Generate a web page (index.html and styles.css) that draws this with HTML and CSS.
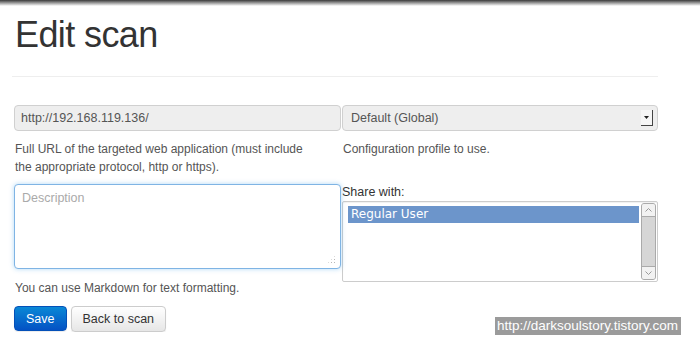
FILE: index.html
```html
<!DOCTYPE html>
<html lang="en">
<head>
    <meta charset="UTF-8">
    <meta name="viewport" content="width=device-width, initial-scale=1.0">
    <title>Edit scan</title>
    <link rel="stylesheet" href="styles.css">
</head>
<body>
    <div class="topbar"></div>
    <div class="page">
        <h1>Edit scan</h1>
        <hr class="divider">

        <div class="row first">
            <div class="col">
                <input class="field" type="text" value="http://192.168.119.136/" readonly>
                <p class="help">Full URL of the targeted web application (must include the appropriate protocol, http or https).</p>
            </div>
            <div class="col">
                <div class="select">
                    <span>Default (Global)</span>
                    <span class="select-arrow"><svg width="5" height="3" viewBox="0 0 5 3"><path d="M0 0h5L2.5 3z" fill="#222"/></svg></span>
                </div>
                <p class="help">Configuration profile to use.</p>
            </div>
        </div>

        <div class="row">
            <div class="col">
                <div class="area-wrap">
                    <textarea class="area" placeholder="Description"></textarea>
                </div>
                <p class="help note">You can use Markdown for text formatting.</p>
                <div class="actions">
                    <button class="btn btn-primary">Save</button>
                    <button class="btn">Back to scan</button>
                </div>
            </div>
            <div class="col">
                <label class="label">Share with:</label>
                <div class="listbox">
                    <div class="options">
                        <div class="option selected">Regular User</div>
                    </div>
                    <div class="scrollbar">
                        <span class="scroll-btn"><svg width="7" height="4" viewBox="0 0 7 4"><path d="M0.5 3.5L3.5 0.5L6.5 3.5" fill="none" stroke="#999"/></svg></span>
                        <span class="scroll-track"></span>
                        <span class="scroll-btn"><svg width="7" height="4" viewBox="0 0 7 4"><path d="M0.5 0.5L3.5 3.5L6.5 0.5" fill="none" stroke="#999"/></svg></span>
                    </div>
                </div>
            </div>
        </div>
    </div>

    <div class="watermark">http://darksoulstory.tistory.com</div>
</body>
</html>
```

FILE: styles.css
```css
body {
    margin: 0;
    font-family: "Liberation Sans", Arial, sans-serif;
    font-size: 12px;
    color: #555;
    background: #fff;
}
.topbar {
    height: 6px;
    background: linear-gradient(#3a3a3a, #8a8a8a 40%, #fff);
}
.page {
    width: 644px;
    padding-left: 14px;
}
h1 {
    margin: 9px 0 0 1px;
    font-size: 36px;
    font-weight: normal;
    letter-spacing: -0.6px;
    line-height: 40px;
    color: #333;
}
.divider {
    margin: 21px 0 0 -2px;
    border: 0;
    border-top: 1px solid #eee;
}
.row {
    display: grid;
    grid-template-columns: 328px 316px;
}
.row.first { margin-top: 28px; }
.field {
    box-sizing: border-box;
    display: block;
    width: 327px;
    height: 26px;
    margin: 0;
    padding: 0 6px;
    border: 1px solid #d0d0d0;
    border-radius: 4px;
    background: #eee;
    font-family: inherit;
    font-size: 12.5px;
    color: #555;
    outline: none;
}
.select {
    box-sizing: border-box;
    display: flex;
    align-items: center;
    justify-content: space-between;
    height: 26px;
    padding: 0 4px 0 8px;
    border: 1px solid #d0d0d0;
    border-radius: 4px;
    background: #eee;
    font-size: 12.5px;
    color: #555;
}
.select-arrow {
    display: flex;
    align-items: center;
    justify-content: center;
    width: 11px;
    height: 15px;
    border-right: 1px solid #444;
    border-bottom: 1px solid #444;
    background: #f6f6f6;
}
.help {
    margin: 9px 0 0 1px;
    line-height: 18px;
    color: #555;
}
.col:first-child .help { padding-right: 20px; }
.area-wrap {
    position: relative;
    width: 327px;
    margin-top: 8px;
}
.area-wrap::after {
    content: "";
    position: absolute;
    right: 5px;
    bottom: 5px;
    width: 9px;
    height: 9px;
    background: radial-gradient(circle, #b8b8b8 0.8px, transparent 1px) 0 0 / 3px 3px;
    clip-path: polygon(100% 0, 100% 100%, 0 100%);
}
.area {
    box-sizing: border-box;
    display: block;
    width: 327px;
    height: 85px;
    padding: 6px 7px;
    border: 1px solid #7fb4e4;
    border-radius: 4px;
    box-shadow: 0 0 5px rgba(82, 168, 236, 0.45);
    font-family: inherit;
    font-size: 12.5px;
    color: #555;
    outline: none;
    resize: none;
}
.area::placeholder { color: #aaa; }
.note { margin-top: 10px; }
.actions {
    display: flex;
    gap: 4px;
    margin-top: 9px;
}
.btn {
    height: 26px;
    padding: 0 11px;
    border: 1px solid #ccc;
    border-radius: 4px;
    background: linear-gradient(#fff, #e6e6e6);
    box-shadow: 0 1px 1px rgba(0,0,0,0.08);
    font-family: inherit;
    font-size: 12.5px;
    color: #333;
}
.btn-primary {
    height: 25px;
    border-color: #0450b8;
    background: linear-gradient(#0a88d6, #0452c4);
    color: #fff;
}
.label {
    display: block;
    margin-top: 8px;
    font-size: 12.5px;
    line-height: 17px;
    color: #333;
}
.listbox {
    box-sizing: border-box;
    display: flex;
    justify-content: space-between;
    width: 316px;
    height: 81px;
    padding: 1px 1px 1px 5px;
    border: 1px solid #ccc;
    border-radius: 2px;
    box-shadow: inset 0 1px 1px rgba(0,0,0,0.06);
}
.options {
    width: 291px;
    padding-top: 3px;
}
.option {
    height: 17px;
    padding-left: 3px;
    font-family: "DejaVu Sans", sans-serif;
    font-size: 12px;
    line-height: 17px;
    color: #333;
}
.option.selected {
    background: #6c95cb;
    color: #fff;
}
.scrollbar {
    display: flex;
    flex-direction: column;
    width: 13px;
    border: 1px solid #aaa;
    border-radius: 3px;
    background: #d6d6d6;
    overflow: hidden;
}
.scroll-btn {
    display: flex;
    align-items: center;
    justify-content: center;
    height: 12px;
    background: #f2f2f2;
}
.scroll-track {
    flex: 1;
    border-top: 1px solid #aaa;
    border-bottom: 1px solid #aaa;
}
.watermark {
    position: absolute;
    left: 495px;
    top: 317px;
    width: 186px;
    height: 18px;
    padding-left: 2px;
    box-sizing: border-box;
    background: #9b9b9b;
    font-size: 13.5px;
    line-height: 18px;
    color: #fff;
}
```
